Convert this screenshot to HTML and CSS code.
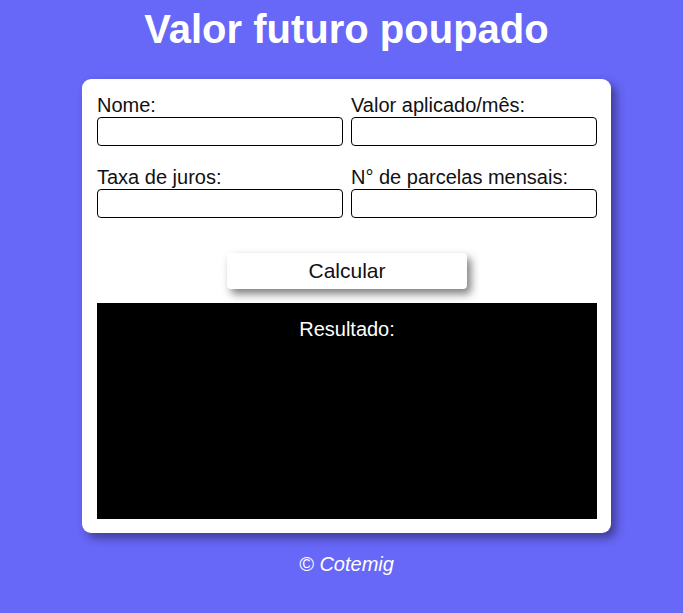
FILE: index.html
```html
<!DOCTYPE html>
<html lang="pt-BR">
<head>
<meta charset="utf-8">
<title>Valor futuro poupado</title>
<link rel="stylesheet" href="styles.css">
</head>
<body>
<h1 class="title">Valor futuro poupado</h1>
<main class="card">
  <div class="fields">
    <label class="field"><span class="label">Nome:</span><input class="input" type="text"></label>
    <label class="field"><span class="label">Valor aplicado/mês:</span><input class="input" type="text"></label>
    <label class="field"><span class="label">Taxa de juros:</span><input class="input" type="text"></label>
    <label class="field"><span class="label">N° de parcelas mensais:</span><input class="input" type="text"></label>
  </div>
  <div class="actions"><button class="btn" type="button">Calcular</button></div>
  <div class="result">Resultado:</div>
</main>
<footer class="footer">© Cotemig</footer>
</body>
</html>
```
FILE: styles.css
```css
html, body {
  margin: 0;
  padding: 0;
}
body {
  background: #6767f8;
  font-family: "Liberation Sans", Arial, sans-serif;
  color: #000;
  display: flex;
  flex-direction: column;
  align-items: center;
  padding-left: 10px;
}
.title {
  margin: 6px 0 0;
  font-size: 40px;
  line-height: 46px;
  font-weight: bold;
  color: #fff;
  text-align: center;
}
.card {
  margin-top: 27px;
  width: 500px;
  padding: 15px 14px 14px 15px;
  background: #fff;
  border-radius: 9px;
  box-shadow: 5px 5px 10px rgba(0, 0, 0, 0.4);
}
.fields {
  display: grid;
  grid-template-columns: 246px 246px;
  column-gap: 8px;
  row-gap: 20px;
}
.field {
  display: flex;
  flex-direction: column;
}
.label {
  font-size: 20px;
  line-height: 22px;
  color: #111;
}
.input {
  margin: 1px 0 0;
  box-sizing: border-box;
  width: 246px;
  height: 29px;
  border: 1px solid #000;
  border-radius: 4px;
  background: #fff;
  padding: 0 4px;
  font-size: 16px;
}
.actions {
  display: flex;
  justify-content: center;
  margin-top: 35px;
}
.btn {
  width: 240px;
  height: 36px;
  border: none;
  border-radius: 4px;
  background: #fff;
  font-family: "Liberation Sans", Arial, sans-serif;
  font-size: 21px;
  color: #111;
  box-shadow: 4px 5px 8px rgba(0, 0, 0, 0.5);
}
.result {
  margin-top: 14px;
  height: 216px;
  box-sizing: border-box;
  background: #000;
  color: #fff;
  text-align: center;
  font-size: 20px;
  line-height: 23px;
  padding-top: 15px;
}
.footer {
  margin-top: 20px;
  color: #fff;
  font-style: italic;
  font-size: 20px;
  line-height: 23px;
  text-align: center;
}
```
